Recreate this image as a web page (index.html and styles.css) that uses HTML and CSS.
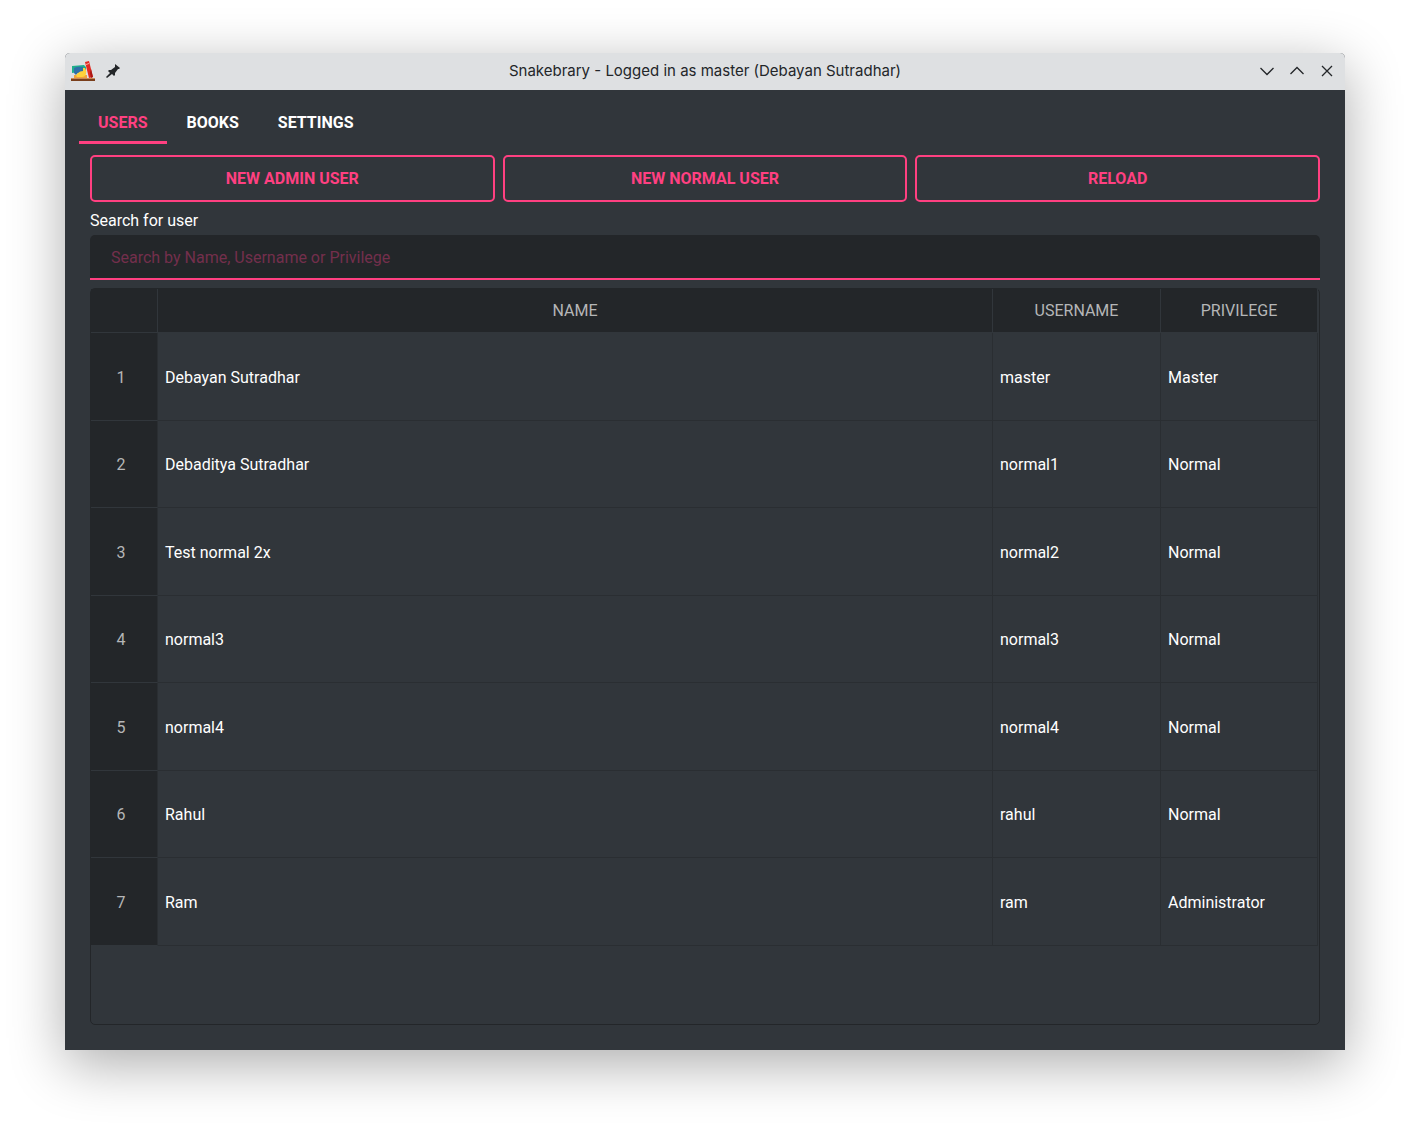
FILE: index.html
```html
<!DOCTYPE html>
<html lang="en">
<head>
<meta charset="utf-8">
<title>Snakebrary</title>
<link rel="stylesheet" href="styles.css">
</head>
<body>
<div class="window">
  <header class="titlebar">
    <div class="titlebar-side">
      <svg class="app-icon" viewBox="0 0 24 24" aria-hidden="true">
        <path fill="#7a3f1c" d="M0 20h24v2H0z"/>
        <path fill="#c98a55" d="M0 19h24v1H0z"/>
        <path fill="#f0a23c" d="M3 16h13v3H3z"/>
        <path fill="#1fae8c" d="M1 7l12-1 2 2v4L1 14z"/>
        <path fill="#2f6fa8" d="M3 9q4-2 9-1v5q-2 2-5 1l-2 2-2-2z"/>
        <path fill="#ffd23c" d="M7 14q2-2 5-2V9h2q2 3 1 6-1 3-4 3H6q-2-2 1-4z"/>
        <path fill="#e22a22" d="M14 3l4-1 4 16-4 1z"/>
        <path fill="#f8b0a0" d="M15 5l3-1v1l-3 1z"/>
        <path fill="#a81814" d="M20 10l2 8-2 1-1-5z"/>
      </svg>
      <button class="icon-button" type="button" aria-label="Keep on all desktops">
        <svg viewBox="0 0 16 16" aria-hidden="true">
          <path fill="#232629" d="M10 1l5 4-1 1h-1l-3 4v2l-1 1-2-2-5 4-1-1 4-4-2-2 1-1h2l4-3V2z"/>
        </svg>
      </button>
    </div>
    <h1 class="title">Snakebrary - Logged in as master (Debayan Sutradhar)</h1>
    <div class="titlebar-side titlebar-controls">
      <button class="icon-button" type="button" aria-label="Minimize"><svg viewBox="0 0 16 16" aria-hidden="true"><path class="stroke" d="M1.500 5l6.500 6.500L14.500 5"/></svg></button>
      <button class="icon-button" type="button" aria-label="Maximize"><svg viewBox="0 0 16 16" aria-hidden="true"><path class="stroke" d="M1.500 11L8 4.500l6.500 6.500"/></svg></button>
      <button class="icon-button" type="button" aria-label="Close"><svg viewBox="0 0 16 16" aria-hidden="true"><path class="stroke" d="M3 3l10 10M13 3L3 13"/></svg></button>
    </div>
  </header>
  <nav class="tabs" role="tablist">
    <button class="tab tab-active" type="button" role="tab" aria-selected="true">USERS</button>
    <button class="tab" type="button" role="tab" aria-selected="false">BOOKS</button>
    <button class="tab" type="button" role="tab" aria-selected="false">SETTINGS</button>
  </nav>
  <main class="panel">
    <div class="actions">
      <button class="action" type="button">NEW ADMIN USER</button>
      <button class="action" type="button">NEW NORMAL USER</button>
      <button class="action" type="button">RELOAD</button>
    </div>
    <label class="search-label" for="search">Search for user</label>
    <input class="search" id="search" type="text" placeholder="Search by Name, Username or Privilege">
    <div class="table-frame">
      <table class="users">
        <colgroup><col class="col-index"><col><col class="col-username"><col class="col-privilege"></colgroup>
        <thead>
          <tr><td class="corner"></td><th scope="col">NAME</th><th scope="col">USERNAME</th><th scope="col">PRIVILEGE</th></tr>
        </thead>
        <tbody>
          <tr><th scope="row">1</th><td>Debayan Sutradhar</td><td>master</td><td>Master</td></tr>
          <tr><th scope="row">2</th><td>Debaditya Sutradhar</td><td>normal1</td><td>Normal</td></tr>
          <tr><th scope="row">3</th><td>Test normal 2x</td><td>normal2</td><td>Normal</td></tr>
          <tr><th scope="row">4</th><td>normal3</td><td>normal3</td><td>Normal</td></tr>
          <tr><th scope="row">5</th><td>normal4</td><td>normal4</td><td>Normal</td></tr>
          <tr><th scope="row">6</th><td>Rahul</td><td>rahul</td><td>Normal</td></tr>
          <tr><th scope="row">7</th><td>Ram</td><td>ram</td><td>Administrator</td></tr>
        </tbody>
      </table>
    </div>
  </main>
</div>
</body>
</html>
```
FILE: styles.css
```css
:root {
  --surface: #31363b;
  --dark: #232629;
  --line: #2a2e32;
  --accent: #ff4081;
}

* { box-sizing: border-box; }

body {
  margin: 0;
  min-height: 100vh;
  padding: 53px 65px 77px;
  display: flex;
  background: #fff;
  color: #fff;
  font: 16px/20px Roboto, sans-serif;
}

button, input { font: inherit; }

.window {
  flex: 1;
  min-width: 0;
  display: flex;
  flex-direction: column;
  background: var(--surface);
  border-radius: 5px 5px 0 0;
  box-shadow: 0 14px 56px rgba(0, 0, 0, 0.33);
}

.titlebar {
  height: 37px;
  padding: 0 6px 2px;
  display: grid;
  grid-template-columns: 1fr auto 1fr;
  align-items: center;
  background: #dee0e2;
  color: #232629;
  border-radius: 5px 5px 0 0;
}

.titlebar-side {
  display: flex;
  align-items: center;
  gap: 10px;
}

.titlebar-controls {
  justify-content: flex-end;
  gap: 14px;
  padding-right: 4px;
}

.title {
  margin: 0;
  font: 400 15px/20px Inter, sans-serif;
}

.app-icon { width: 24px; height: 24px; }

.icon-button {
  width: 16px;
  height: 16px;
  padding: 0;
  border: 0;
  background: none;
}

.icon-button svg { display: block; }

.stroke {
  fill: none;
  stroke: #232629;
  stroke-width: 1.3;
}

.tabs {
  display: flex;
  gap: 1px;
  padding: 12px 14px 0;
}

.tab {
  height: 42px;
  padding: 2px 19px 0;
  border: 0;
  border-bottom: 3px solid transparent;
  background: none;
  color: #fff;
  font-weight: 700;
}

.tab-active {
  border-color: var(--accent);
  color: var(--accent);
}

.panel {
  flex: 1;
  display: flex;
  flex-direction: column;
  padding: 11px 25px 25px;
}

.actions {
  display: grid;
  grid-template-columns: repeat(3, 1fr);
  gap: 8px;
}

.action {
  height: 47px;
  padding: 0 16px;
  border: 2px solid var(--accent);
  border-radius: 5px;
  background: none;
  color: var(--accent);
  font-weight: 700;
}

.search-label { margin: 9px 0 4px; }

.search {
  height: 45px;
  padding: 2px 21px 0;
  border: 0;
  border-bottom: 2px solid var(--accent);
  border-radius: 5px 5px 0 0;
  background: var(--dark);
  color: var(--accent);
}

.search::placeholder { color: #732f4c; opacity: 1; }

.table-frame {
  flex: 1;
  margin-top: 8px;
  padding-right: 1px;
  border: 1px solid var(--dark);
  border-radius: 5px;
}

.users {
  width: 100%;
  table-layout: fixed;
  border-collapse: separate;
  border-spacing: 0;
}

.col-index { width: 67px; }
.col-username { width: 168px; }
.col-privilege { width: 157px; }

.users th {
  padding: 0;
  background: var(--dark);
  color: #b5b6b7;
  font-weight: 400;
  text-align: center;
}

.users td {
  padding: 2px 7px 0;
  border-right: 1px solid var(--line);
  border-bottom: 1px solid var(--line);
}

.users thead th, .users .corner {
  height: 44px;
  background: var(--dark);
  border-right: 1px solid var(--surface);
  border-bottom: 1px solid var(--surface);
}

.users tbody th {
  padding: 2px 6px 0 0;
  border-right: 1px solid var(--line);
  border-bottom: 1px solid var(--surface);
}

.users tbody tr { height: 87px; }
.users tbody tr:nth-child(odd) { height: 88px; }
```
